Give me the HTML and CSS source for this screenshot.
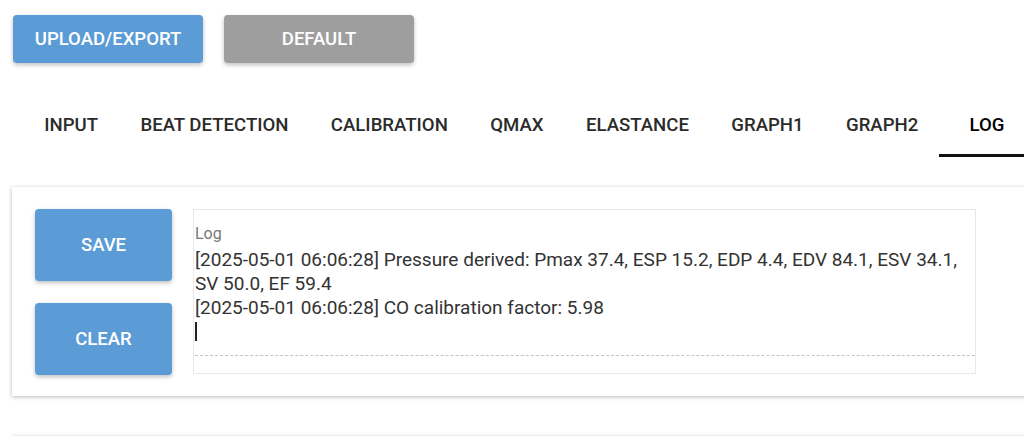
FILE: index.html
```html
<!DOCTYPE html>
<html lang="en">
<head>
    <meta charset="UTF-8">
    <meta name="viewport" content="width=device-width, initial-scale=1.0">
    <title>Log</title>
    <link rel="stylesheet" href="styles.css">
</head>
<body>
    <div class="page">
        <div class="top-actions">
            <button class="btn btn-primary">Upload/Export</button>
            <button class="btn btn-grey">Default</button>
        </div>

        <nav class="tabs">
            <div class="tab">Input</div>
            <div class="tab">Beat Detection</div>
            <div class="tab">Calibration</div>
            <div class="tab">Qmax</div>
            <div class="tab">Elastance</div>
            <div class="tab">Graph1</div>
            <div class="tab">Graph2</div>
            <div class="tab active">Log</div>
        </nav>

        <div class="card">
            <div class="side-buttons">
                <button class="btn btn-primary btn-tall">Save</button>
                <button class="btn btn-primary btn-tall">Clear</button>
            </div>
            <div class="log-box">
                <div class="log-label">Log</div>
                <div class="log-text">[2025-05-01 06:06:28] Pressure derived: Pmax 37.4, ESP 15.2, EDP 4.4, EDV 84.1, ESV 34.1, SV 50.0, EF 59.4<br>[2025-05-01 06:06:28] CO calibration factor: 5.98<br><span class="caret"></span></div>
                <div class="log-underline"></div>
            </div>
        </div>

        <div class="card card-next"></div>
    </div>
</body>
</html>
```

FILE: styles.css
```css
body {
    font-family: Roboto, "Liberation Sans", Arial, sans-serif;
    margin: 0;
    background: #fff;
    overflow: hidden;
}
.page {
    width: 1060px;
}
.top-actions {
    display: flex;
    gap: 21px;
    padding: 15px 0 0 13px;
}
.btn {
    font-family: Roboto, "Liberation Sans", Arial, sans-serif;
    font-size: 18.5px;
    font-weight: 500;
    text-transform: uppercase;
    color: #fff;
    border: none;
    border-radius: 4px;
    width: 190px;
    height: 48px;
    padding: 0;
    box-shadow: 0 2px 4px rgba(0,0,0,0.25);
    cursor: pointer;
}
.btn-primary {
    background-color: #5b9bd6;
}
.btn-grey {
    background-color: #9e9e9e;
}
.tabs {
    display: flex;
    margin: 32px 0 0 23px;
}
.tab {
    padding: 0 21.2px;
    min-width: 90px;
    box-sizing: border-box;
    height: 62px;
    display: flex;
    align-items: center;
    justify-content: center;
    font-size: 18.6px;
    font-weight: 500;
    text-transform: uppercase;
    color: #2b2b2b;
    border-bottom: 3px solid transparent;
}
.tab.active {
    color: #000;
    border-bottom-color: #111;
    min-width: 95px;
}
.card {
    display: flex;
    gap: 21px;
    margin: 30px 0 0 12px;
    padding: 22px 23px 21px;
    background: #fff;
    box-shadow: 0 1px 4px rgba(0,0,0,0.28);
}
.side-buttons {
    display: flex;
    flex-direction: column;
    gap: 22px;
}
.btn-tall {
    width: 137px;
    height: 72px;
}
.log-box {
    width: 783px;
    height: 165px;
    box-sizing: border-box;
    border: 1px solid #e8e8ec;
    padding: 15px 0 0 1px;
}
.log-label {
    font-size: 16px;
    color: #777;
    line-height: 18px;
}
.log-text {
    font-size: 19px;
    line-height: 24px;
    color: #333;
    margin-top: 5px;
    padding-right: 4px;
}
.caret {
    display: inline-block;
    width: 2px;
    height: 19px;
    background: #222;
    vertical-align: -3px;
}
.log-underline {
    margin-top: 11px;
    border-top: 1px dashed #c4c4c4;
}
.card-next {
    margin-top: 40px;
    height: 40px;
    padding: 0;
}
```
